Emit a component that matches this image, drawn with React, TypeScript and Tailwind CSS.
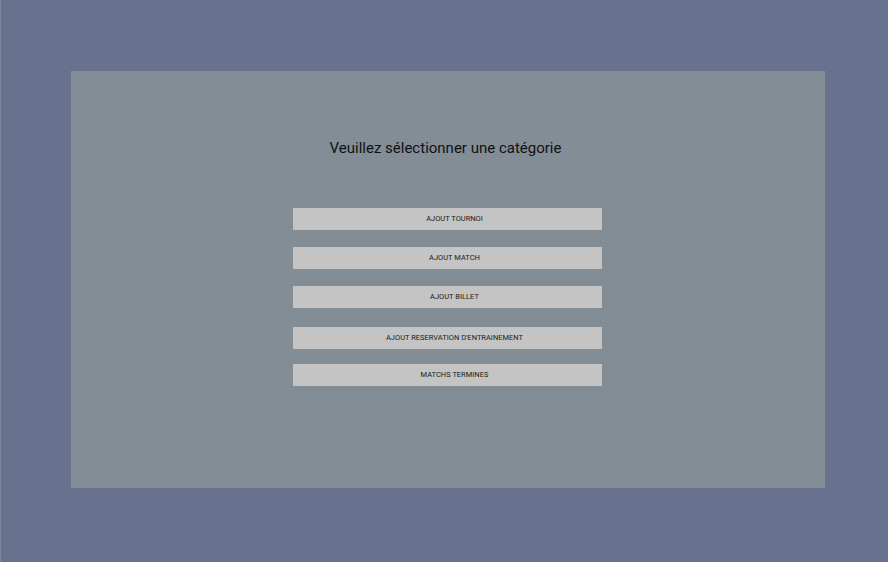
export default function App() {
  const items = [
    { label: "AJOUT TOURNOI", mt: "mt-[48px]" },
    { label: "AJOUT MATCH", mt: "mt-[17px]" },
    { label: "AJOUT BILLET", mt: "mt-[17px]" },
    { label: "AJOUT RESERVATION D'ENTRAINEMENT", mt: "mt-[19px]" },
    { label: "MATCHS TERMINES", mt: "mt-[15px]" },
  ];
  return (
    <div className="w-[888px] h-[562px] bg-[#68728f] flex flex-col pt-[71px] pl-[70px] border-l border-[#7d8499]" style={{ fontFamily: "Roboto, 'Liberation Sans', sans-serif" }}>
      <div className="w-[754px] h-[417px] bg-[#838d96] flex flex-col items-center pt-[65px]">
        <h1 className="text-[15px] leading-[24px] text-[#111] font-normal -ml-[5px]">Veuillez sélectionner une catégorie</h1>
        {items.map((it) => (
          <button
            key={it.label}
            className={`${it.mt} -ml-[1px] w-[309px] h-[22px] pl-[14px] bg-[#c4c4c4] text-[7.5px] text-[#1a1a1a] flex items-center justify-center`}
          >
            {it.label}
          </button>
        ))}
      </div>
    </div>
  );
}
